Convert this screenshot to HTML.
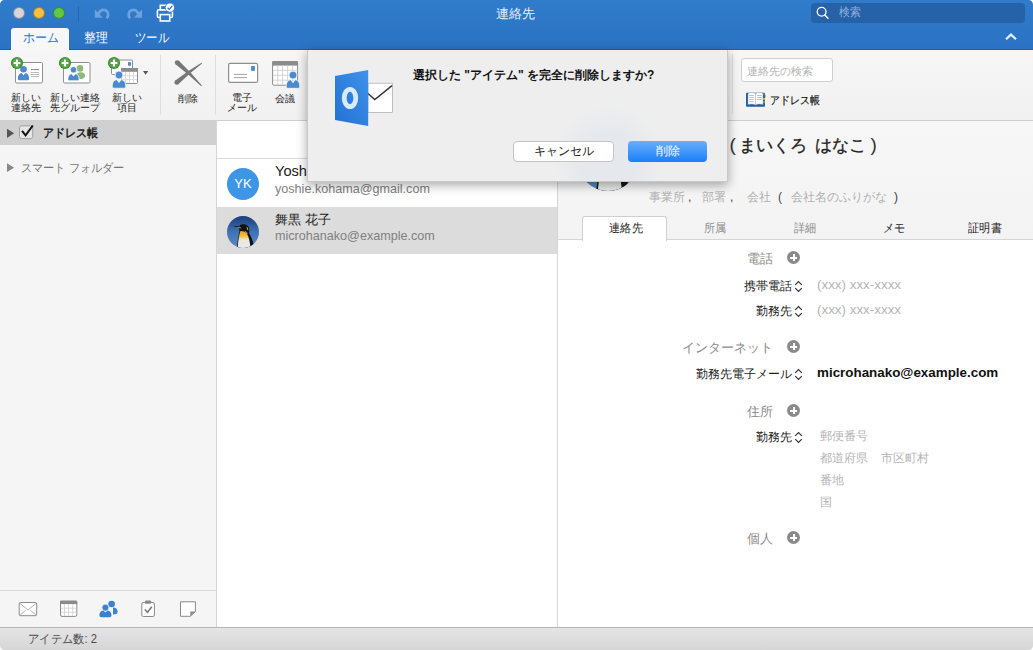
<!DOCTYPE html>
<html><head><meta charset="utf-8">
<style>
*{box-sizing:border-box;margin:0;padding:0}
html,body{width:1033px;height:650px;overflow:hidden;background:#fff;font-family:"Liberation Sans",sans-serif;position:relative}
.a{position:absolute}
.t{position:absolute;white-space:nowrap;line-height:1}
#title{left:0;top:0;width:1033px;height:50px;background:linear-gradient(#307cca,#2b72c3 98%,#1f5fad 98%)}
.tl{width:12.4px;height:12.4px;border-radius:50%;top:6.7px;border:1px solid rgba(0,20,60,.35)}
#tb{z-index:2;left:0;top:50px;width:1033px;height:71px;background:linear-gradient(#f6f6f6,#f1f1f1);border-bottom:1px solid #cfcfcf}
#side{left:0;top:120px;width:217px;height:507px;background:#f5f5f5;border-right:1px solid #d6d6d6}
#list{z-index:1;left:217px;top:120px;width:341px;height:507px;background:#fff;border-right:1px solid #d6d6d6}
#detail{left:557px;top:120px;width:476px;height:507px;background:#fff}
#status{left:0;top:627px;width:1033px;height:23px;background:linear-gradient(#e4e4e4,#d6d6d6);border-top:1px solid #b5b5b5}
#dlg{z-index:3;left:307px;top:50px;width:421px;height:131.5px;background:radial-gradient(circle at 301px 111px,rgba(222,227,235,.55) 28px,rgba(238,238,238,0) 55px),#eeeeee;box-shadow:0 3px 10px rgba(0,0,0,.35);border:1px solid #c8c8c8;border-top:none}
.tbl{position:absolute;text-align:center;font-size:10px;line-height:9.5px;color:#222;white-space:nowrap}
.btn{border-radius:4px;text-align:center;font-size:12px;line-height:19px}
.nm{top:17px;font-size:17px;color:#222;-webkit-text-stroke:0.35px #222}
.sb{top:71px;font-size:12px;color:#b0b0b0}
.dk{color:#444}
.tab{top:102px;text-align:center;font-size:12px;color:#222;transform:scaleX(.93)}
.gr{color:#8c8c8c}
.sh{right:260px;font-size:13px;color:#8a8a8a}
.fl{right:230px;font-size:12px;color:#222;padding-right:11px}
.ud{position:absolute;right:0;top:0px}
.ph{left:260px;font-size:13.4px;color:#b5b5b5}
.ad{left:263px;font-size:12px;color:#b5b5b5}
.pl{position:absolute;left:230px;width:13px;height:13px;border-radius:50%;background:#8a8a8a}
.pl::before{content:"";position:absolute;left:3px;top:5.5px;width:7px;height:2px;background:#fff}
.pl::after{content:"";position:absolute;left:5.5px;top:3px;width:2px;height:7px;background:#fff}
.lbl{font-size:13px;color:#222}
</style></head><body>
<div id="title" class="a">
  <div class="a tl" style="left:12.8px;background:#d6d6d6"></div>
  <div class="a tl" style="left:32.9px;background:#f7be3f"></div>
  <div class="a tl" style="left:52.9px;background:#60c843"></div>
  <div class="a" style="left:78px;top:6px;width:1px;height:16px;background:#2765ae"></div>
  <svg class="a" style="left:0;top:0" width="200" height="28">
    <g fill="#6ea2dc">
      <path d="M94.8 9.6V17.8H103Z"/>
      <path d="M98.6 14.6A4.8 4.8 0 1 1 106.6 18.2" fill="none" stroke="#6ea2dc" stroke-width="2.7"/>
      <path d="M142 9.6V17.8H133.8Z"/>
      <path d="M138.2 14.6A4.8 4.8 0 1 0 130.2 18.2" fill="none" stroke="#6ea2dc" stroke-width="2.7"/>
    </g>
    <g fill="none" stroke="#fff" stroke-width="1.6">
      <rect x="160.3" y="5.3" width="6" height="4.5"/>
      <path d="M160 17.5H158.6C157.9 17.5 157.4 17 157.4 16.3V11.3C157.4 10.3 158.2 9.8 159 9.8H170.6C171.6 9.8 172.4 10.5 172.4 11.5V16.3C172.4 17 171.9 17.5 171.2 17.5H170"/>
      <rect x="160.3" y="14.6" width="9.4" height="6.4"/>
    </g>
    <circle cx="169.9" cy="7.6" r="4.6" fill="#fff" stroke="#2d73c6" stroke-width="0.8"/>
    <path d="M167.6 7.8L169.3 9.4L172.3 5.9" fill="none" stroke="#2d73c6" stroke-width="1.2"/>
  </svg>
  <svg class="a" style="left:1003px;top:31px" width="16" height="12">
    <path d="M3 8.2L8 3.6L13 8.2" fill="none" stroke="#e6eef8" stroke-width="2.2"/>
  </svg>
  <div class="t" style="left:496px;top:7px;font-size:13px;color:#e8f0fa">連絡先</div>
  <div class="a" style="left:811px;top:3px;width:214px;height:20px;border-radius:4px;background:#2662a8"></div>
  <svg class="a" style="left:814px;top:4px" width="18" height="18">
    <circle cx="7.6" cy="7.8" r="4.4" fill="none" stroke="#fff" stroke-width="1.3"/>
    <path d="M10.8 11L14 14.2" stroke="#fff" stroke-width="1.5" stroke-linecap="round"/>
  </svg>
  <div class="t" style="left:839px;top:7px;font-size:11.5px;color:#8fb2dd;transform:scaleX(.9);transform-origin:left">検索</div>
  <div class="a" style="left:11px;top:28px;width:58px;height:22px;background:#f7f7f7;border-radius:3px 3px 0 0"></div>
  <div class="t" style="left:22.5px;top:31px;font-size:13px;color:#2d73c6;transform:scaleX(.92);transform-origin:left">ホーム</div>
  <div class="t" style="left:84px;top:31px;font-size:13px;color:#fff;transform:scaleX(.91);transform-origin:left">整理</div>
  <div class="t" style="left:135px;top:31px;font-size:13px;color:#fff;transform:scaleX(.88);transform-origin:left">ツール</div>
</div>
<div id="tb" class="a">
  <svg class="a" style="left:0;top:0" width="307" height="70" viewBox="0 50 307 70">
    <defs>
      <g id="plus"><circle r="6.1" fill="#3f8c33"/><circle r="4.9" fill="#53a545"/><path d="M-3.4 0H3.4M0 -3.4V3.4" stroke="#fff" stroke-width="2.2"/></g>
      <g id="person"><circle cx="0" cy="-5.4" r="3.3"/><path d="M-5.6 4.4C-5.8 0.6 -4 -1.4 -1.7 -1.5L0 0.9L1.7 -1.5C4 -1.4 5.8 0.6 5.6 4.4C5.5 5.3 4.8 5.6 3.8 5.6H-3.8C-4.8 5.6 -5.5 5.3 -5.6 4.4Z"/></g>
    </defs>
    <!-- icon 1 -->
    <rect x="15.5" y="62.5" width="27" height="20.5" rx="1.2" fill="#fff" stroke="#8f8f8f" stroke-width="1"/>
    <path d="M31 69.6H39" stroke="#8a8a8a" stroke-width="1"/>
    <path d="M31 72.5H39M31 74.5H39M31 76.6H39" stroke="#b5b5b5" stroke-width="0.9"/>
    <use href="#person" x="23.5" y="74.6" fill="#4a8bd0"/>
    <use href="#plus" x="17" y="63"/>
    <!-- icon 2 -->
    <rect x="63.5" y="62.5" width="26.5" height="20.5" rx="1.2" fill="#fff" stroke="#8f8f8f" stroke-width="1"/>
    <circle cx="80" cy="68.4" r="3.3" fill="#8dba7c"/>
    <ellipse cx="80.8" cy="75.6" rx="4.2" ry="3.4" fill="#8dba7c"/>
    <use href="#person" x="73.5" y="75.2" fill="#4a8bd0" stroke="#fff" stroke-width="0.8"/>
    <use href="#plus" x="65" y="63"/>
    <!-- icon 3 -->
    <rect x="111.5" y="60" width="21" height="14.5" rx="1" fill="#fff" stroke="#8f8f8f" stroke-width="1"/>
    <rect x="128" y="62.2" width="3" height="3.5" fill="#4a8bd0"/>
    <rect x="121.5" y="68.5" width="16" height="15" rx="1" fill="#fff" stroke="#8c8c8c" stroke-width="1"/>
    <rect x="121" y="68" width="17" height="3.8" fill="#8c8c8c"/>
    <path d="M125.5 72V83M129.5 72V83M133.5 72V83M122 75.8H137M122 79.6H137" stroke="#d5d5d5" stroke-width="0.9"/>
    <use href="#person" x="119" y="81.5" fill="#4a8bd0" stroke="#f4f4f4" stroke-width="0.7" transform="translate(119 81.5) scale(1.2) translate(-119 -81.5)"/>
    <use href="#plus" x="114" y="63"/>
    <path d="M143 71H148.2L145.6 74.8Z" fill="#555"/>
    <!-- separator -->
    <rect x="160" y="55" width="1" height="60" fill="#dedede"/>
    <!-- X -->
    <g fill="#777"><path d="M175.55 64.34 Q188.90 74.72 201.26 86.16 L201.94 85.44 Q191.00 72.52 178.85 60.86 Z M178.26 84.30 Q189.60 73.19 202.07 63.56 L201.53 62.84 Q187.78 70.82 175.34 80.50 Z"/><circle cx="177.20" cy="62.60" r="2.40"/><circle cx="176.80" cy="82.40" r="2.40"/></g>
    <rect x="215" y="55" width="1" height="60" fill="#dedede"/>
    <!-- envelope -->
    <rect x="228.6" y="63.4" width="29" height="19" rx="1.5" fill="#fff" stroke="#8f8f8f" stroke-width="1.2"/>
    <rect x="251.1" y="66" width="3.8" height="4.9" fill="#4a8bd0"/>
    <path d="M234 74.4H247M234 77.6H247" stroke="#9a9a9a" stroke-width="0.9"/>
    <!-- calendar -->
    <rect x="272.6" y="61.6" width="25" height="23.6" rx="1" fill="#fff" stroke="#8c8c8c" stroke-width="1"/>
    <rect x="272.2" y="61.2" width="25.8" height="4.4" fill="#8c8c8c"/>
    <path d="M277.7 65.5V85M282.6 65.5V85M287.6 65.5V85M292.6 65.5V85M273 70.3H297.5M273 75.3H297.5M273 80.2H297.5" stroke="#d0d0d0" stroke-width="0.9"/>
    <g transform="translate(293 81.6) scale(1.2)"><use href="#person" x="0" y="0" fill="#4a8bd0" stroke="#fff" stroke-width="0.6"/></g>
  </svg>
  <div class="tbl" style="left:6px;top:43px;width:40px">新しい<br>連絡先</div>
  <div class="tbl" style="left:45px;top:43px;width:60px">新しい連絡<br>先グループ</div>
  <div class="tbl" style="left:107px;top:43px;width:40px">新しい<br>項目</div>
  <div class="tbl" style="left:168px;top:44px;width:40px">削除</div>
  <div class="tbl" style="left:222px;top:43px;width:40px">電子<br>メール</div>
  <div class="tbl" style="left:265px;top:44px;width:40px">会議</div>
  <div class="a" style="left:732px;top:4px;width:1px;height:60px;background:#dcdcdc"></div>
  <div class="a" style="left:741px;top:8px;width:92px;height:24px;background:#fff;border:1px solid #cfcfcf;border-radius:3px"></div>
  <div class="t" style="left:747px;top:16px;font-size:11.2px;color:#b3b3b3">連絡先の検索</div>
  <svg class="a" style="left:740px;top:36px" width="30" height="26" viewBox="740 86 30 26">
    <rect x="746" y="92.8" width="19" height="14" rx="1" fill="#1f5ea8"/>
    <path d="M748 93.5C750.5 92.3 753.5 92.3 755.5 93.5C757.5 92.3 760.5 92.3 763 93.5V104.6C760.5 103.8 757.5 103.8 755.5 105C753.5 103.8 750.5 103.8 748 104.6Z" fill="#fff" stroke="#9a9a9a" stroke-width="0.5"/>
    <path d="M755.5 93.5V105" stroke="#aaa" stroke-width="0.6"/>
    <path d="M749.2 95.5H753.8M749.2 97.5H753.8M749.2 99.5H753.8M749.2 101.5H753.8M757.2 95.5H761.8M757.2 97.5H761.8M757.2 99.5H761.8" stroke="#b0b0b0" stroke-width="0.8"/>
    <path d="M763 93.5C765 94 766 95.5 765.5 97.5" fill="none" stroke="#999" stroke-width="0.7"/>
    <rect x="763.2" y="98" width="1.8" height="1.9" fill="#f0b323"/>
    <rect x="763.2" y="101" width="1.8" height="2" fill="#6ab04c"/>
  </svg>
  <div class="t" style="left:770px;top:45px;font-size:10.5px;color:#111;-webkit-text-stroke:0.2px #111;transform:scaleX(.9);transform-origin:left">アドレス帳</div>
</div>
<div id="side" class="a">
  <div class="a" style="left:0;top:0;width:216px;height:25px;background:#d0d0d0"></div>
  <svg class="a" style="left:0;top:0" width="216" height="60">
    <path d="M7 8.7L14.1 13.3L7 17.9Z" fill="#555"/>
    <rect x="19.5" y="5.8" width="13.2" height="12.8" rx="2.2" fill="#e6e6e6" stroke="#9a9a9a" stroke-width="0.9"/>
    <path d="M22 10.8L25.6 15.4L32.8 5.5" fill="none" stroke="#111" stroke-width="2"/>
    <path d="M7 43.3L14.1 47.7L7 52.1Z" fill="#888"/>
  </svg>
  <div class="t" style="left:42.5px;top:7px;font-size:12px;font-weight:bold;color:#222;transform:scaleX(.915);transform-origin:left">アドレス帳</div>
  <div class="t" style="left:21px;top:42px;font-size:12px;color:#777;transform:scaleX(.93);transform-origin:left">スマート フォルダー</div>
  <div class="a" style="left:0;top:470px;width:216px;height:1px;background:#dadada"></div>
  <svg class="a" style="left:0;top:471px" width="216" height="36" viewBox="0 591 216 36">
    <rect x="19.2" y="602.5" width="17.5" height="13.2" rx="1.5" fill="#fff" stroke="#8a8a8a" stroke-width="1"/>
    <path d="M19.5 603L28 610L36.5 603M19.5 615.5L25.5 610.5M36.5 615.5L30.5 610.5" fill="none" stroke="#9a9a9a" stroke-width="0.8"/>
    <rect x="60.5" y="601.2" width="16.3" height="15.2" rx="1.5" fill="#fff" stroke="#8a8a8a" stroke-width="1"/>
    <rect x="60" y="600.7" width="17.2" height="3.4" fill="#8a8a8a"/>
    <path d="M64.5 604V616M68.6 604V616M72.7 604V616M61 608.2H76.5M61 612.3H76.5" stroke="#d0d0d0" stroke-width="0.8"/>
    <g fill="#3a82d0">
      <circle cx="111.6" cy="604" r="3.3"/><path d="M113 607.5C116 607.5 117.8 609.5 117.6 612C117.5 613.8 116 614.5 113 614.5Z"/>
      <circle cx="105.4" cy="607.6" r="3.4" stroke="#f5f5f5" stroke-width="0.6"/>
      <path d="M99.4 615C99.4 612 101.2 610.6 103.3 610.4L105.4 612.6L107.5 610.4C109.6 610.6 111.5 612 111.5 615C111.5 616.6 110.6 617.2 109.5 617.2H101.3C100.2 617.2 99.4 616.6 99.4 615Z"/>
    </g>
    <rect x="141.8" y="602.5" width="12.6" height="14" rx="1.5" fill="#fff" stroke="#8a8a8a" stroke-width="1"/>
    <rect x="145" y="600.4" width="6.2" height="3.4" rx="1" fill="#8a8a8a"/>
    <path d="M144.8 609.5L147.5 612.3L151.8 606.8" fill="none" stroke="#777" stroke-width="1.5"/>
    <path d="M180.5 601.8H195.4V611.5L190.3 616.3H180.5Z" fill="#fff" stroke="#8a8a8a" stroke-width="1"/>
    <path d="M195.4 611.5L190.3 616.3V611.5Z" fill="#8a8a8a"/>
  </svg>
</div>
<div id="list" class="a">
  <div class="a" style="left:0;top:38px;width:340px;height:1px;background:#d9d9d9"></div>
  <div class="a" style="left:0;top:87px;width:340px;height:47px;background:#dcdcdc"></div>
  <div class="a" style="left:10px;top:48px;width:32px;height:32px;border-radius:50%;background:#3d95e6;color:#fff;font-size:13px;text-align:center;line-height:32px">YK</div>
  <div class="t" style="left:58px;top:44px;font-size:14.6px;color:#222">Yoshie Kohama</div>
  <div class="t" style="left:58px;top:63px;font-size:12.6px;color:#808080">yoshie.kohama@gmail.com</div>
  <svg class="a" style="left:10px;top:96px" width="32" height="32" viewBox="0 0 32 32">
    <defs><clipPath id="cp1"><circle cx="16" cy="16" r="16"/></clipPath>
    <linearGradient id="sky" x1="0" y1="0" x2="0" y2="1"><stop offset="0" stop-color="#1b3c7c"/><stop offset=".5" stop-color="#3f72b4"/><stop offset="1" stop-color="#5a8cc4"/></linearGradient>
    <linearGradient id="neck" x1="0" y1="0" x2="0" y2="1"><stop offset="0" stop-color="#eea21a"/><stop offset=".28" stop-color="#f4bf3a"/><stop offset=".5" stop-color="#eee8da"/><stop offset="1" stop-color="#e6eaef"/></linearGradient></defs>
    <g id="peng" clip-path="url(#cp1)">
      <rect width="32" height="32" fill="url(#sky)"/>
      <path d="M12.5 15C12 12.5 12.2 10 13 9C15 7.6 19 8 21 10C22.5 12 22.5 15 22 17C24 20 25.5 24 26.5 28L28 33H9.5L10.5 26C11.2 22 12 18 12.5 15Z" fill="#111"/>
      <path d="M13.5 15C15.5 14.8 18 15.5 19.5 17C21.5 20 23 25 23.5 33H10.5C11 26 12 19 13.5 15Z" fill="url(#neck)"/>
      <path d="M17.5 14.5C19 15 20.5 16.5 21 18L19.5 17.5C18.8 16.5 18 15.5 17.5 14.5Z" fill="#8aa0bc"/>
      <path d="M19.5 10.5C20.8 11.5 21.5 12.8 21.2 14.2L20 13.5Z" fill="#f0a020"/>
      <path d="M5.5 9.7L12 10.2L14 11.6L9 11Z" fill="#1a1a1a"/>
      <path d="M9 11L13.5 11.3L14.5 12.6Z" fill="#e7a043"/>
    </g>
  </svg>
  <div class="t" style="left:58px;top:93px;font-size:13px;color:#222">舞黒 花子</div>
  <div class="t" style="left:58px;top:110px;font-size:12.6px;color:#808080">microhanako@example.com</div>
</div>
<div id="detail" class="a">
  <div class="a" style="left:0;top:0;width:476px;height:120px;background:linear-gradient(#f7f7f7,#f3f3f3);border-bottom:1px solid #d5d5d5"></div>
  <svg class="a" style="left:21px;top:10.5px" width="60" height="60" viewBox="0 0 32 32">
    <use href="#peng"/>
  </svg>
  <div class="t nm" style="left:172.5px;top:15px;font-size:19px;-webkit-text-stroke:0;color:#333">(</div>
  <div class="t nm" style="left:181.5px">まいくろ</div>
  <div class="t nm" style="left:257.5px">はなこ</div>
  <div class="t nm" style="left:313.5px;top:15px;font-size:19px;-webkit-text-stroke:0;color:#333">)</div>
  <div class="t sb" style="left:92px">事業所</div>
  <div class="t sb dk" style="left:131px">,</div>
  <div class="t sb" style="left:145px">部署</div>
  <div class="t sb dk" style="left:173px">,</div>
  <div class="t sb" style="left:190px">会社</div>
  <div class="t sb dk" style="left:221px">(</div>
  <div class="t sb" style="left:234px">会社名のふりがな</div>
  <div class="t sb dk" style="left:337px">)</div>
  <div class="a" style="left:25px;top:96px;width:85px;height:25px;background:#fff;border:1px solid #cfcfcf;border-bottom:none;border-radius:3px 3px 0 0"></div>
  <div class="t tab" style="left:24px;width:90px">連絡先</div>
  <div class="t tab gr" style="left:113px;width:90px">所属</div>
  <div class="t tab gr" style="left:203px;width:90px">詳細</div>
  <div class="t tab" style="left:292px;width:90px">メモ</div>
  <div class="t tab" style="left:383px;width:90px">証明書</div>
  <div class="t sh" style="top:132px">電話</div><div class="pl" style="top:131px"></div>
  <div class="t fl" style="top:160px">携帯電話<svg class="ud" width="9" height="13" viewBox="0 0 9 13"><path d="M1.2 4.9L4.5 1.5L7.8 4.9M1.2 8.1L4.5 11.5L7.8 8.1" fill="none" stroke="#333" stroke-width="1.2"/></svg></div><div class="t ph" style="top:158px">(xxx) xxx-xxxx</div>
  <div class="t fl" style="top:185px">勤務先<svg class="ud" width="9" height="13" viewBox="0 0 9 13"><path d="M1.2 4.9L4.5 1.5L7.8 4.9M1.2 8.1L4.5 11.5L7.8 8.1" fill="none" stroke="#333" stroke-width="1.2"/></svg></div><div class="t ph" style="top:183px">(xxx) xxx-xxxx</div>
  <div class="t sh" style="top:221px">インターネット</div><div class="pl" style="top:220px"></div>
  <div class="t fl" style="top:248px">勤務先電子メール<svg class="ud" width="9" height="13" viewBox="0 0 9 13"><path d="M1.2 4.9L4.5 1.5L7.8 4.9M1.2 8.1L4.5 11.5L7.8 8.1" fill="none" stroke="#333" stroke-width="1.2"/></svg></div><div class="t" style="left:260px;top:246px;font-size:13.4px;font-weight:bold;color:#111">microhanako@example.com</div>
  <div class="t sh" style="top:285px">住所</div><div class="pl" style="top:284px"></div>
  <div class="t fl" style="top:311px">勤務先<svg class="ud" width="9" height="13" viewBox="0 0 9 13"><path d="M1.2 4.9L4.5 1.5L7.8 4.9M1.2 8.1L4.5 11.5L7.8 8.1" fill="none" stroke="#333" stroke-width="1.2"/></svg></div>
  <div class="t ad" style="top:310px">郵便番号</div>
  <div class="t ad" style="top:332px">都道府県 &nbsp;&nbsp;&nbsp;市区町村</div>
  <div class="t ad" style="top:354px">番地</div>
  <div class="t ad" style="top:376px">国</div>
  <div class="t sh" style="top:412px">個人</div><div class="pl" style="top:411px"></div>
</div>
<div id="status" class="a">
  <div class="t" style="left:28px;top:5px;font-size:12px;color:#4a4a4a;transform:scaleX(.94);transform-origin:left">アイテム数: 2</div>
</div>
<div id="dlg" class="a">
  <svg class="a" style="left:26px;top:18px" width="60" height="60" viewBox="334 68 60 60">
    <defs><linearGradient id="door" x1="0" y1="1" x2="1" y2="0"><stop offset="0" stop-color="#2371d2"/><stop offset="1" stop-color="#3f92ea"/></linearGradient></defs>
    <rect x="368" y="83.2" width="24.3" height="29.4" fill="#fff" stroke="#9a9a9a" stroke-width="0.6"/>
    <path d="M368 93.4L374.8 99.6L392 85.6" fill="none" stroke="#333" stroke-width="1.4"/>
    <path d="M335 76L368.2 69.9V126L335 120.1Z" fill="url(#door)"/>
    <ellipse cx="350" cy="98" rx="5.8" ry="8.7" fill="none" stroke="#d6ebfb" stroke-width="4.8"/>
  </svg>
  <div class="t" style="left:105px;top:19px;font-size:12px;font-weight:bold;color:#111">選択した "アイテム" を完全に削除しますか?</div>
  <div class="a btn" style="left:205px;top:91px;width:101px;height:21px;background:#fff;border:1px solid #c3c3c3;color:#222">キャンセル</div>
  <div class="a btn" style="left:320px;top:91px;width:79px;height:21px;line-height:21px;background:linear-gradient(#68aff9,#1b7ffa);color:#fff">削除</div>
</div>
<svg class="a" style="left:0;top:0;z-index:5" width="5" height="5"><path d="M0 0H4.5A4.5 4.5 0 0 0 0 4.5Z" fill="#fff"/></svg>
<svg class="a" style="left:1028px;top:0;z-index:5" width="5" height="5"><path d="M5 0H0.5A4.5 4.5 0 0 1 5 4.5Z" fill="#fff"/></svg>
<svg class="a" style="left:0;top:645px;z-index:5" width="5" height="5"><path d="M0 5H4.5A4.5 4.5 0 0 1 0 0.5Z" fill="#fff"/></svg>
<svg class="a" style="left:1028px;top:645px;z-index:5" width="5" height="5"><path d="M5 5H0.5A4.5 4.5 0 0 0 5 0.5Z" fill="#fff"/></svg>
</body></html>
